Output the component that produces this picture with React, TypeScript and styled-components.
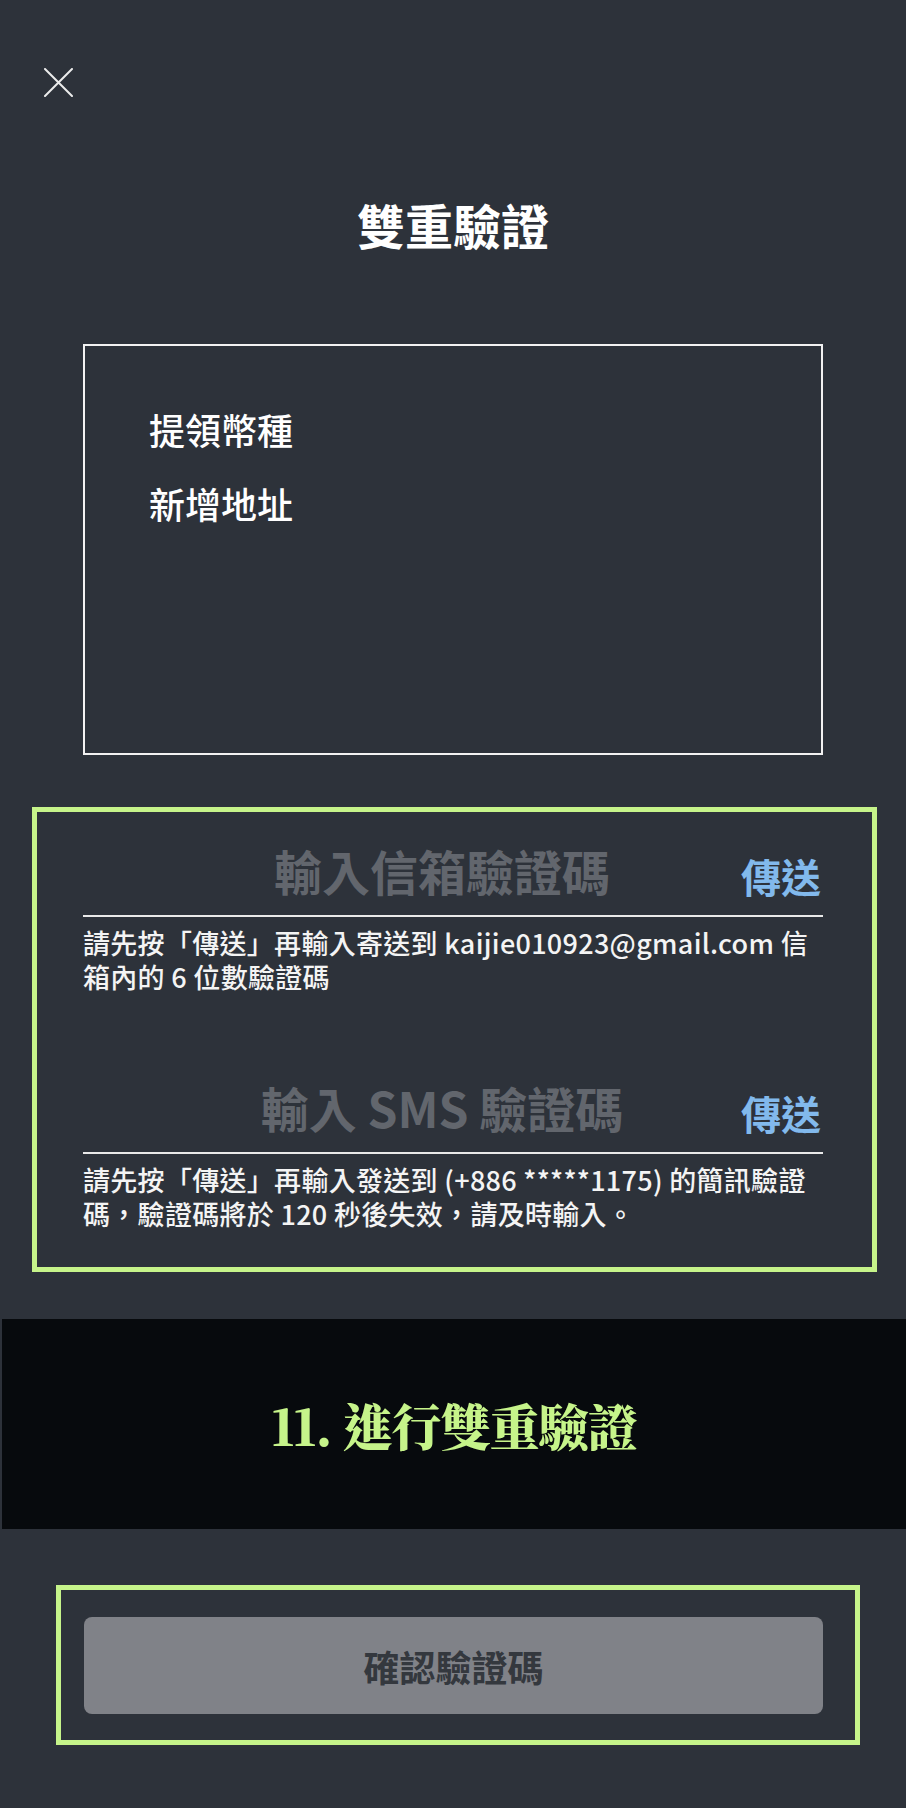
import React from "react";
import styled, { createGlobalStyle } from "styled-components";

const GlobalStyle = createGlobalStyle`
  html, body {
    margin: 0;
    padding: 0;
    background: #2d323a;
  }
  body {
    font-family: "Noto Sans CJK TC", "Noto Sans", sans-serif;
    color: #ffffff;
  }
  * { box-sizing: border-box; }
`;

const Page = styled.div`
  width: 906px;
  min-height: 1808px;
  background: #2d323a;
  display: flex;
  flex-direction: column;
`;

const TopBar = styled.div`
  display: flex;
  padding: 68px 0 0 44px;
`;

const CloseButton = styled.button`
  width: 29px;
  height: 29px;
  padding: 0;
  border: none;
  background: transparent;
  display: flex;
  cursor: pointer;
`;

const Title = styled.h1`
  margin: 103px 0 0;
  font-size: 48px;
  line-height: 48px;
  font-weight: 700;
  text-align: center;
  color: #ffffff;
`;

const SummaryBox = styled.div`
  margin: 96px 0 0 83px;
  width: 740px;
  height: 411px;
  border: 2px solid #f2f2f2;
  padding: 65px 0 0 64px;
  display: flex;
  flex-direction: column;
  gap: 38px;
`;

const SummaryItem = styled.div`
  font-size: 36px;
  line-height: 36px;
  font-weight: 500;
  color: #ffffff;
`;

const HighlightPanel = styled.section`
  margin: 52px 0 0 32px;
  width: 845px;
  border: 5px solid #c6f48a;
  padding: 34px 49px 36px 46px;
  display: flex;
  flex-direction: column;
`;

const FieldBlock = styled.div<{ $gapTop?: number }>`
  display: flex;
  flex-direction: column;
  margin-top: ${(p) => p.$gapTop ?? 0}px;
`;

const FieldRow = styled.div`
  display: flex;
  align-items: flex-end;
  border-bottom: 2px solid #e9e9e9;
  padding-bottom: 21px;
`;

const Placeholder = styled.div`
  flex: 1;
  padding-left: 60px;
  text-align: center;
  font-size: 48px;
  line-height: 48px;
  font-weight: 700;
  color: #62666d;
  white-space: nowrap;
`;

const SendButton = styled.button`
  border: none;
  background: transparent;
  padding: 0 2px 0 0;
  margin-bottom: -2px;
  font-family: "Noto Sans CJK TC", sans-serif;
  font-size: 40px;
  line-height: 40px;
  font-weight: 700;
  color: #82b9ec;
  cursor: pointer;
`;

const Helper = styled.p`
  margin: 9px 0 0;
  font-size: 27px;
  line-height: 34px;
  font-weight: 500;
  letter-spacing: 0.3px;
  color: #f4f4f4;
`;

const Band = styled.div`
  margin: 47px 0 0 2px;
  height: 210px;
  background: #070a0d;
  display: flex;
  align-items: center;
  justify-content: center;
`;

const BandTitle = styled.h2`
  margin: 0;
  font-family: "Noto Serif CJK TC", "Liberation Serif", "Noto Sans CJK TC", serif;
  font-size: 50px;
  line-height: 50px;
  font-weight: 900;
  color: #c6f48a;
  letter-spacing: -1px;
`;

const ActionFrame = styled.div`
  margin: 56px 0 0 56px;
  width: 804px;
  height: 160px;
  border: 5px solid #c6f48a;
  padding: 27px 32px 26px 23px;
  display: flex;
`;

const ConfirmButton = styled.button`
  flex: 1;
  border: none;
  border-radius: 8px;
  background: #808288;
  font-family: "Noto Sans CJK TC", sans-serif;
  font-size: 36px;
  font-weight: 700;
  color: #34383e;
  cursor: pointer;
`;

export default function App() {
  return (
    <>
      <GlobalStyle />
      <Page>
        <TopBar>
          <CloseButton aria-label="close">
            <svg width="29" height="29" viewBox="0 0 29 29">
              <path d="M1 1 L28 28 M28 1 L1 28" stroke="#ececec" strokeWidth="2" strokeLinecap="round" />
            </svg>
          </CloseButton>
        </TopBar>
        <Title>雙重驗證</Title>
        <SummaryBox>
          <SummaryItem>提領幣種</SummaryItem>
          <SummaryItem>新增地址</SummaryItem>
        </SummaryBox>
        <HighlightPanel>
          <FieldBlock>
            <FieldRow>
              <Placeholder>輸入信箱驗證碼</Placeholder>
              <SendButton>傳送</SendButton>
            </FieldRow>
            <Helper>
              請先按「傳送」再輸入寄送到 kaijie010923@gmail.com 信箱內的 6 位數驗證碼
            </Helper>
          </FieldBlock>
          <FieldBlock $gapTop={89}>
            <FieldRow>
              <Placeholder>輸入 SMS 驗證碼</Placeholder>
              <SendButton>傳送</SendButton>
            </FieldRow>
            <Helper>
              請先按「傳送」再輸入發送到 (+886 *****1175) 的簡訊驗證碼，驗證碼將於 120 秒後失效，請及時輸入。
            </Helper>
          </FieldBlock>
        </HighlightPanel>
        <Band>
          <BandTitle>11. 進行雙重驗證</BandTitle>
        </Band>
        <ActionFrame>
          <ConfirmButton>確認驗證碼</ConfirmButton>
        </ActionFrame>
      </Page>
    </>
  );
}
